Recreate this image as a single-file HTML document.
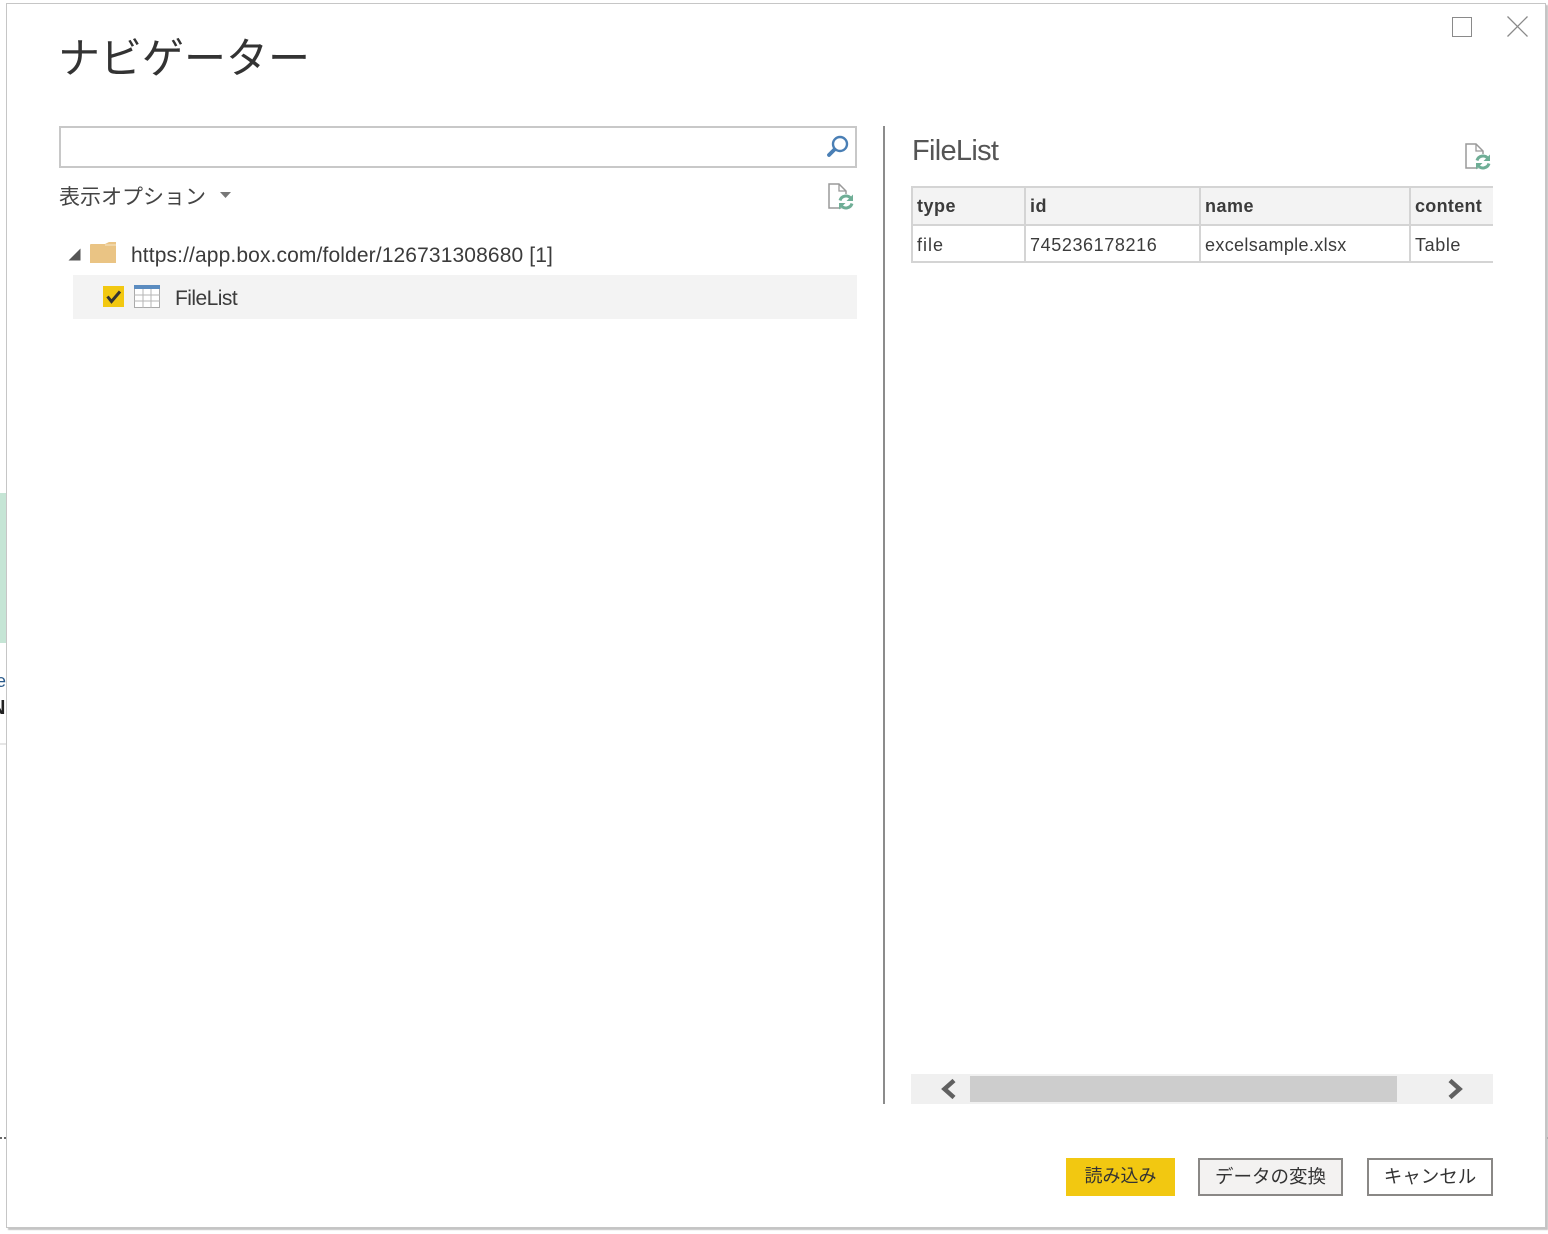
<!DOCTYPE html>
<html lang="ja"><head><meta charset="utf-8"><title>ナビゲーター</title>
<style>
html,body{margin:0;padding:0;background:#fff}
body{position:relative;width:1548px;height:1234px;overflow:hidden;font-family:"Liberation Sans","Noto Sans CJK JP",sans-serif;color:#333}
.a{position:absolute;white-space:nowrap}
.cell{position:absolute;font-size:18px;line-height:24px;white-space:nowrap;color:#3b3b3b}
.b{font-weight:bold}
svg{position:absolute;overflow:visible}
.btn{position:absolute;box-sizing:border-box;height:38px;top:1158px;text-align:center;font-size:18.5px;line-height:33px;color:#333}
</style></head><body>
<!-- behind window -->
<div class="a" style="left:0;top:493px;width:6px;height:150px;background:#c5e5d5"></div>
<div class="a" style="left:0;top:743px;width:6px;height:2px;background:#e6e6e6"></div>
<div class="a" style="left:0;top:1137px;width:2px;height:2px;background:#666"></div>
<div class="a" style="left:4px;top:1137px;width:2px;height:2px;background:#666"></div>
<div class="a" style="left:1546px;top:1137px;width:2px;height:2px;background:#555"></div>
<div class="a" style="left:0;top:672px;width:6px;height:18px;overflow:hidden;font-size:18px;line-height:18px;color:#2a5a8a"><span style="position:absolute;left:-4px">e</span></div>
<div class="a" style="left:0;top:699px;width:6px;height:19px;overflow:hidden;font-size:20px;line-height:19px;font-weight:bold;color:#222"><span style="position:absolute;left:-9px">N</span></div>
<!-- window -->
<div class="a" style="left:6px;top:3px;width:1538px;height:1223px;border:1px solid #c6c6c6;background:#fff;box-shadow:2px 2px 1px #c4c4c4"></div>
<div class="a" style="left:58px;top:29px;font-size:42px;line-height:60px;color:#333;letter-spacing:0">ナビゲーター</div>
<!-- window controls -->
<div class="a" style="left:1452px;top:17px;width:18px;height:18px;border:1px solid #8a8a8a"></div>
<svg style="left:1507px;top:16px" width="21" height="21"><path d="M.5.5 20.500 20.500M20.500.5.5 20.500" stroke="#8a8a8a" stroke-width="1.300" fill="none"/></svg>
<!-- search -->
<div class="a" style="left:59px;top:126px;width:794px;height:38px;border:2px solid #c8c8c8"></div>
<svg style="left:826px;top:134px" width="24" height="24"><circle cx="14" cy="10" r="7" fill="none" stroke="#4a7fb5" stroke-width="2.400"/><path d="M8.500 15.500 3 21" stroke="#4a7fb5" stroke-width="3.800" stroke-linecap="round"/></svg>
<div class="a" style="left:59px;top:183px;font-size:21px;line-height:30px;color:#444">表示オプション</div>
<svg style="left:220px;top:192px" width="12" height="7"><path d="M0 0H11L5.500 6Z" fill="#777"/></svg>
<svg style="left:828px;top:183px" width="26" height="28"><path d="M1 1H11L18 8V25H1Z" fill="#fff" stroke="#9a9a9a" stroke-width="1.500"/><path d="M11 1V8H18" fill="none" stroke="#9a9a9a" stroke-width="1.300"/><circle cx="18" cy="19" r="8" fill="#fff"/><path d="M12 17.500A6.300 6.300 0 0 1 23 15.500M24 20.500A6.300 6.300 0 0 1 13 22.500" fill="none" stroke="#6fae96" stroke-width="3"/><path d="M25 11.500V18H18.500ZM11 26.500V20H17.500Z" fill="#6fae96"/></svg>
<!-- tree -->
<svg style="left:68px;top:248px" width="13" height="13"><path d="M12.500.5V12.500H.5Z" fill="#555"/></svg>
<svg style="left:90px;top:241px" width="27" height="23"><path d="M0 4Q0 3 1 3H15L19 1H26V22H0Z" fill="#eac484"/><path d="M15 4H26" stroke="#f6e6c8" stroke-width="1"/></svg>
<div class="a" style="left:131px;top:242px;font-size:21px;line-height:28px;color:#3b3b3b;letter-spacing:.12px">https://app.box.com/folder/126731308680 [1]</div>
<div class="a" style="left:73px;top:275px;width:784px;height:44px;background:#f3f3f3"></div>
<div class="a" style="left:103px;top:286px;width:21px;height:21px;background:#f2c811"></div>
<svg style="left:103px;top:286px" width="21" height="21"><path d="M4.500 10.500 8.500 15.500 17 5.500" fill="none" stroke="#333" stroke-width="3"/></svg>
<svg style="left:134px;top:285px" width="26" height="23"><rect x=".5" y=".5" width="25" height="22" fill="#fff" stroke="#aaa"/><rect width="26" height="4" fill="#5b8cc0"/><path d="M0 10H26M0 16H26M9 4V23M17 4V23" stroke="#b5b5b5" fill="none"/></svg>
<div class="a" style="left:175px;top:285px;font-size:21px;line-height:28px;color:#3b3b3b;letter-spacing:-.55px">FileList</div>
<!-- divider -->
<div class="a" style="left:883px;top:126px;width:2px;height:978px;background:#8c8c8c"></div>
<!-- right -->
<div class="a" style="left:912px;top:131px;font-size:29px;line-height:40px;color:#555;letter-spacing:-.7px;font-weight:normal">FileList</div>
<svg style="left:1465px;top:143px" width="26" height="28"><path d="M1 1H11L18 8V25H1Z" fill="#fff" stroke="#9a9a9a" stroke-width="1.500"/><path d="M11 1V8H18" fill="none" stroke="#9a9a9a" stroke-width="1.300"/><circle cx="18" cy="19" r="8" fill="#fff"/><path d="M12 17.500A6.300 6.300 0 0 1 23 15.500M24 20.500A6.300 6.300 0 0 1 13 22.500" fill="none" stroke="#6fae96" stroke-width="3"/><path d="M25 11.500V18H18.500ZM11 26.500V20H17.500Z" fill="#6fae96"/></svg>
<!-- table -->
<div class="a" style="left:911px;top:186px;width:582px;height:40px;background:#f3f3f3"></div>
<div class="a" style="left:911px;top:186px;width:582px;height:2px;background:#d4d4d4"></div>
<div class="a" style="left:911px;top:224px;width:582px;height:2px;background:#d4d4d4"></div>
<div class="a" style="left:911px;top:261px;width:582px;height:2px;background:#d4d4d4"></div>
<div class="a" style="left:911px;top:186px;width:2px;height:77px;background:#d4d4d4"></div>
<div class="a" style="left:1024px;top:186px;width:2px;height:77px;background:#d4d4d4"></div>
<div class="a" style="left:1199px;top:186px;width:2px;height:77px;background:#d4d4d4"></div>
<div class="a" style="left:1409px;top:186px;width:2px;height:77px;background:#d4d4d4"></div>
<div class="cell b" style="left:917px;top:194px;letter-spacing:.5px">type</div>
<div class="cell b" style="left:1030px;top:194px;letter-spacing:.5px">id</div>
<div class="cell b" style="left:1205px;top:194px;letter-spacing:.5px">name</div>
<div class="cell b" style="left:1415px;top:194px;letter-spacing:.3px">content</div>
<div class="cell" style="left:917px;top:233px;letter-spacing:1px">file</div>
<div class="cell" style="left:1030px;top:233px;letter-spacing:.6px">745236178216</div>
<div class="cell" style="left:1205px;top:233px;letter-spacing:.35px">excelsample.xlsx</div>
<div class="cell" style="left:1415px;top:233px;letter-spacing:.6px">Table</div>
<!-- scrollbar -->
<div class="a" style="left:911px;top:1074px;width:582px;height:30px;background:#f0f0f0"></div>
<div class="a" style="left:970px;top:1076px;width:427px;height:26px;background:#cdcdcd"></div>
<svg style="left:940px;top:1079px" width="18" height="20"><path d="M14 1.500 4.500 10 14 18.500" fill="none" stroke="#606060" stroke-width="4.500"/></svg>
<svg style="left:1446px;top:1079px" width="18" height="20"><path d="M4 1.500 13.500 10 4 18.500" fill="none" stroke="#606060" stroke-width="4.500"/></svg>
<!-- buttons -->
<div class="btn" style="left:1066px;width:109px;background:#f2c811;line-height:36px;font-size:18px">読み込み</div>
<div class="btn" style="left:1198px;width:145px;background:#f3f2f1;border:2px solid #8a8886">データの変換</div>
<div class="btn" style="left:1367px;width:126px;background:#fff;border:2px solid #8a8886">キャンセル</div>
</body></html>
